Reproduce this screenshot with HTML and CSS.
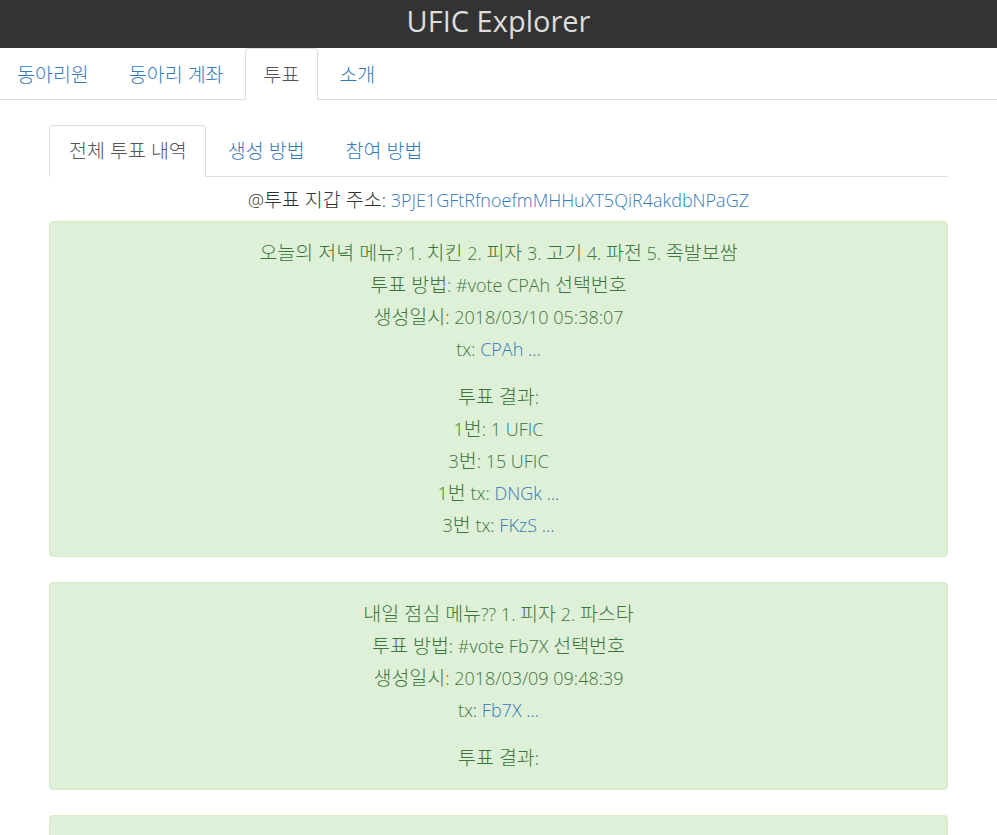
FILE: index.html
```html
<!DOCTYPE html>
<html lang="ko">
<head>
<meta charset="utf-8">
<title>UFIC Explorer</title>
<link rel="stylesheet" href="styles.css">
</head>
<body>
<header class="topbar">UFIC Explorer</header>
<nav class="main-nav">
  <ul class="tabs">
    <li><a href="#"><span class="ko">동아리원</span></a></li>
    <li><a href="#"><span class="ko">동아리 계좌</span></a></li>
    <li class="active"><a href="#"><span class="ko">투표</span></a></li>
    <li><a href="#"><span class="ko">소개</span></a></li>
  </ul>
</nav>
<main class="container">
  <ul class="tabs sub-tabs">
    <li class="active"><a href="#"><span class="ko">전체 투표 내역</span></a></li>
    <li><a href="#"><span class="ko">생성 방법</span></a></li>
    <li><a href="#"><span class="ko">참여 방법</span></a></li>
  </ul>
  <div class="wallet">@<span class="ko">투표 지갑 주소</span>: <a href="#">3PJE1GFtRfnoefmMHHuXT5QiR4akdbNPaGZ</a></div>

  <div class="vote">
    <div><span class="ko">오늘의 저녁 메뉴</span>? 1. <span class="ko">치킨</span> 2. <span class="ko">피자</span> 3. <span class="ko">고기</span> 4. <span class="ko">파전</span> 5. <span class="ko">족발보쌈</span></div>
    <div><span class="ko">투표 방법</span>: #vote CPAh <span class="ko">선택번호</span></div>
    <div><span class="ko">생성일시</span>: 2018/03/10 05:38:07</div>
    <div>tx: <a href="#">CPAh ...</a></div>
    <div class="result">
      <div><span class="ko">투표 결과</span>:</div>
      <div>1<span class="ko">번</span>: 1 UFIC</div>
      <div>3<span class="ko">번</span>: 15 UFIC</div>
      <div>1<span class="ko">번</span> tx: <a href="#">DNGk ...</a></div>
      <div>3<span class="ko">번</span> tx: <a href="#">FKzS ...</a></div>
    </div>
  </div>

  <div class="vote">
    <div><span class="ko">내일 점심 메뉴</span>?? 1. <span class="ko">피자</span> 2. <span class="ko">파스타</span></div>
    <div><span class="ko">투표 방법</span>: #vote Fb7X <span class="ko">선택번호</span></div>
    <div><span class="ko">생성일시</span>: 2018/03/09 09:48:39</div>
    <div>tx: <a href="#">Fb7X ...</a></div>
    <div class="result">
      <div><span class="ko">투표 결과</span>:</div>
    </div>
  </div>

  <div class="vote">
    <div>&nbsp;</div>
  </div>
</main>
</body>
</html>
```
FILE: styles.css
```css
* { box-sizing: border-box; }
html, body { margin: 0; padding: 0; }
body {
  font-family: "Open Sans", "Noto Sans CJK KR", sans-serif;
  font-size: 18px;
  font-weight: 300;
  color: #333;
  background: #fff;
  overflow: hidden;
}
a { color: #337ab7; text-decoration: none; }
.ko { font-size: 19.5px; }

.topbar {
  height: 48px;
  background: #333;
  color: #ddd;
  text-align: center;
  font-size: 29px;
  font-weight: 400;
  line-height: 42px;
}

.tabs {
  list-style: none;
  margin: 0;
  padding: 0;
  display: flex;
  border-bottom: 1px solid #ddd;
}
.tabs li { margin-right: 2px; margin-bottom: -1px; }
.tabs li a {
  display: block;
  padding: 0 18px;
  line-height: 51px;
  height: 52px;
  border: 1px solid transparent;
  border-radius: 4px 4px 0 0;
}
.tabs li.active a {
  color: #555;
  background: #fff;
  border-color: #ddd;
  border-bottom-color: transparent;
}
.main-nav .tabs li:first-child a { padding-left: 16px; }

.container {
  width: 899px;
  margin: 0 auto;
  padding-top: 25px;
}
.sub-tabs li a { height: 52px; line-height: 50px; padding: 0 18px 0 19px; }

.wallet {
  text-align: center;
  line-height: 32px;
  padding: 7px 0 5px;
}

.vote {
  background: #dff0d8;
  border: 1px solid #d6e9c6;
  border-radius: 4px;
  color: #3c763d;
  text-align: center;
  line-height: 32px;
  padding: 15px;
  margin-bottom: 25px;
}
.vote .result { margin-top: 16px; }
```
